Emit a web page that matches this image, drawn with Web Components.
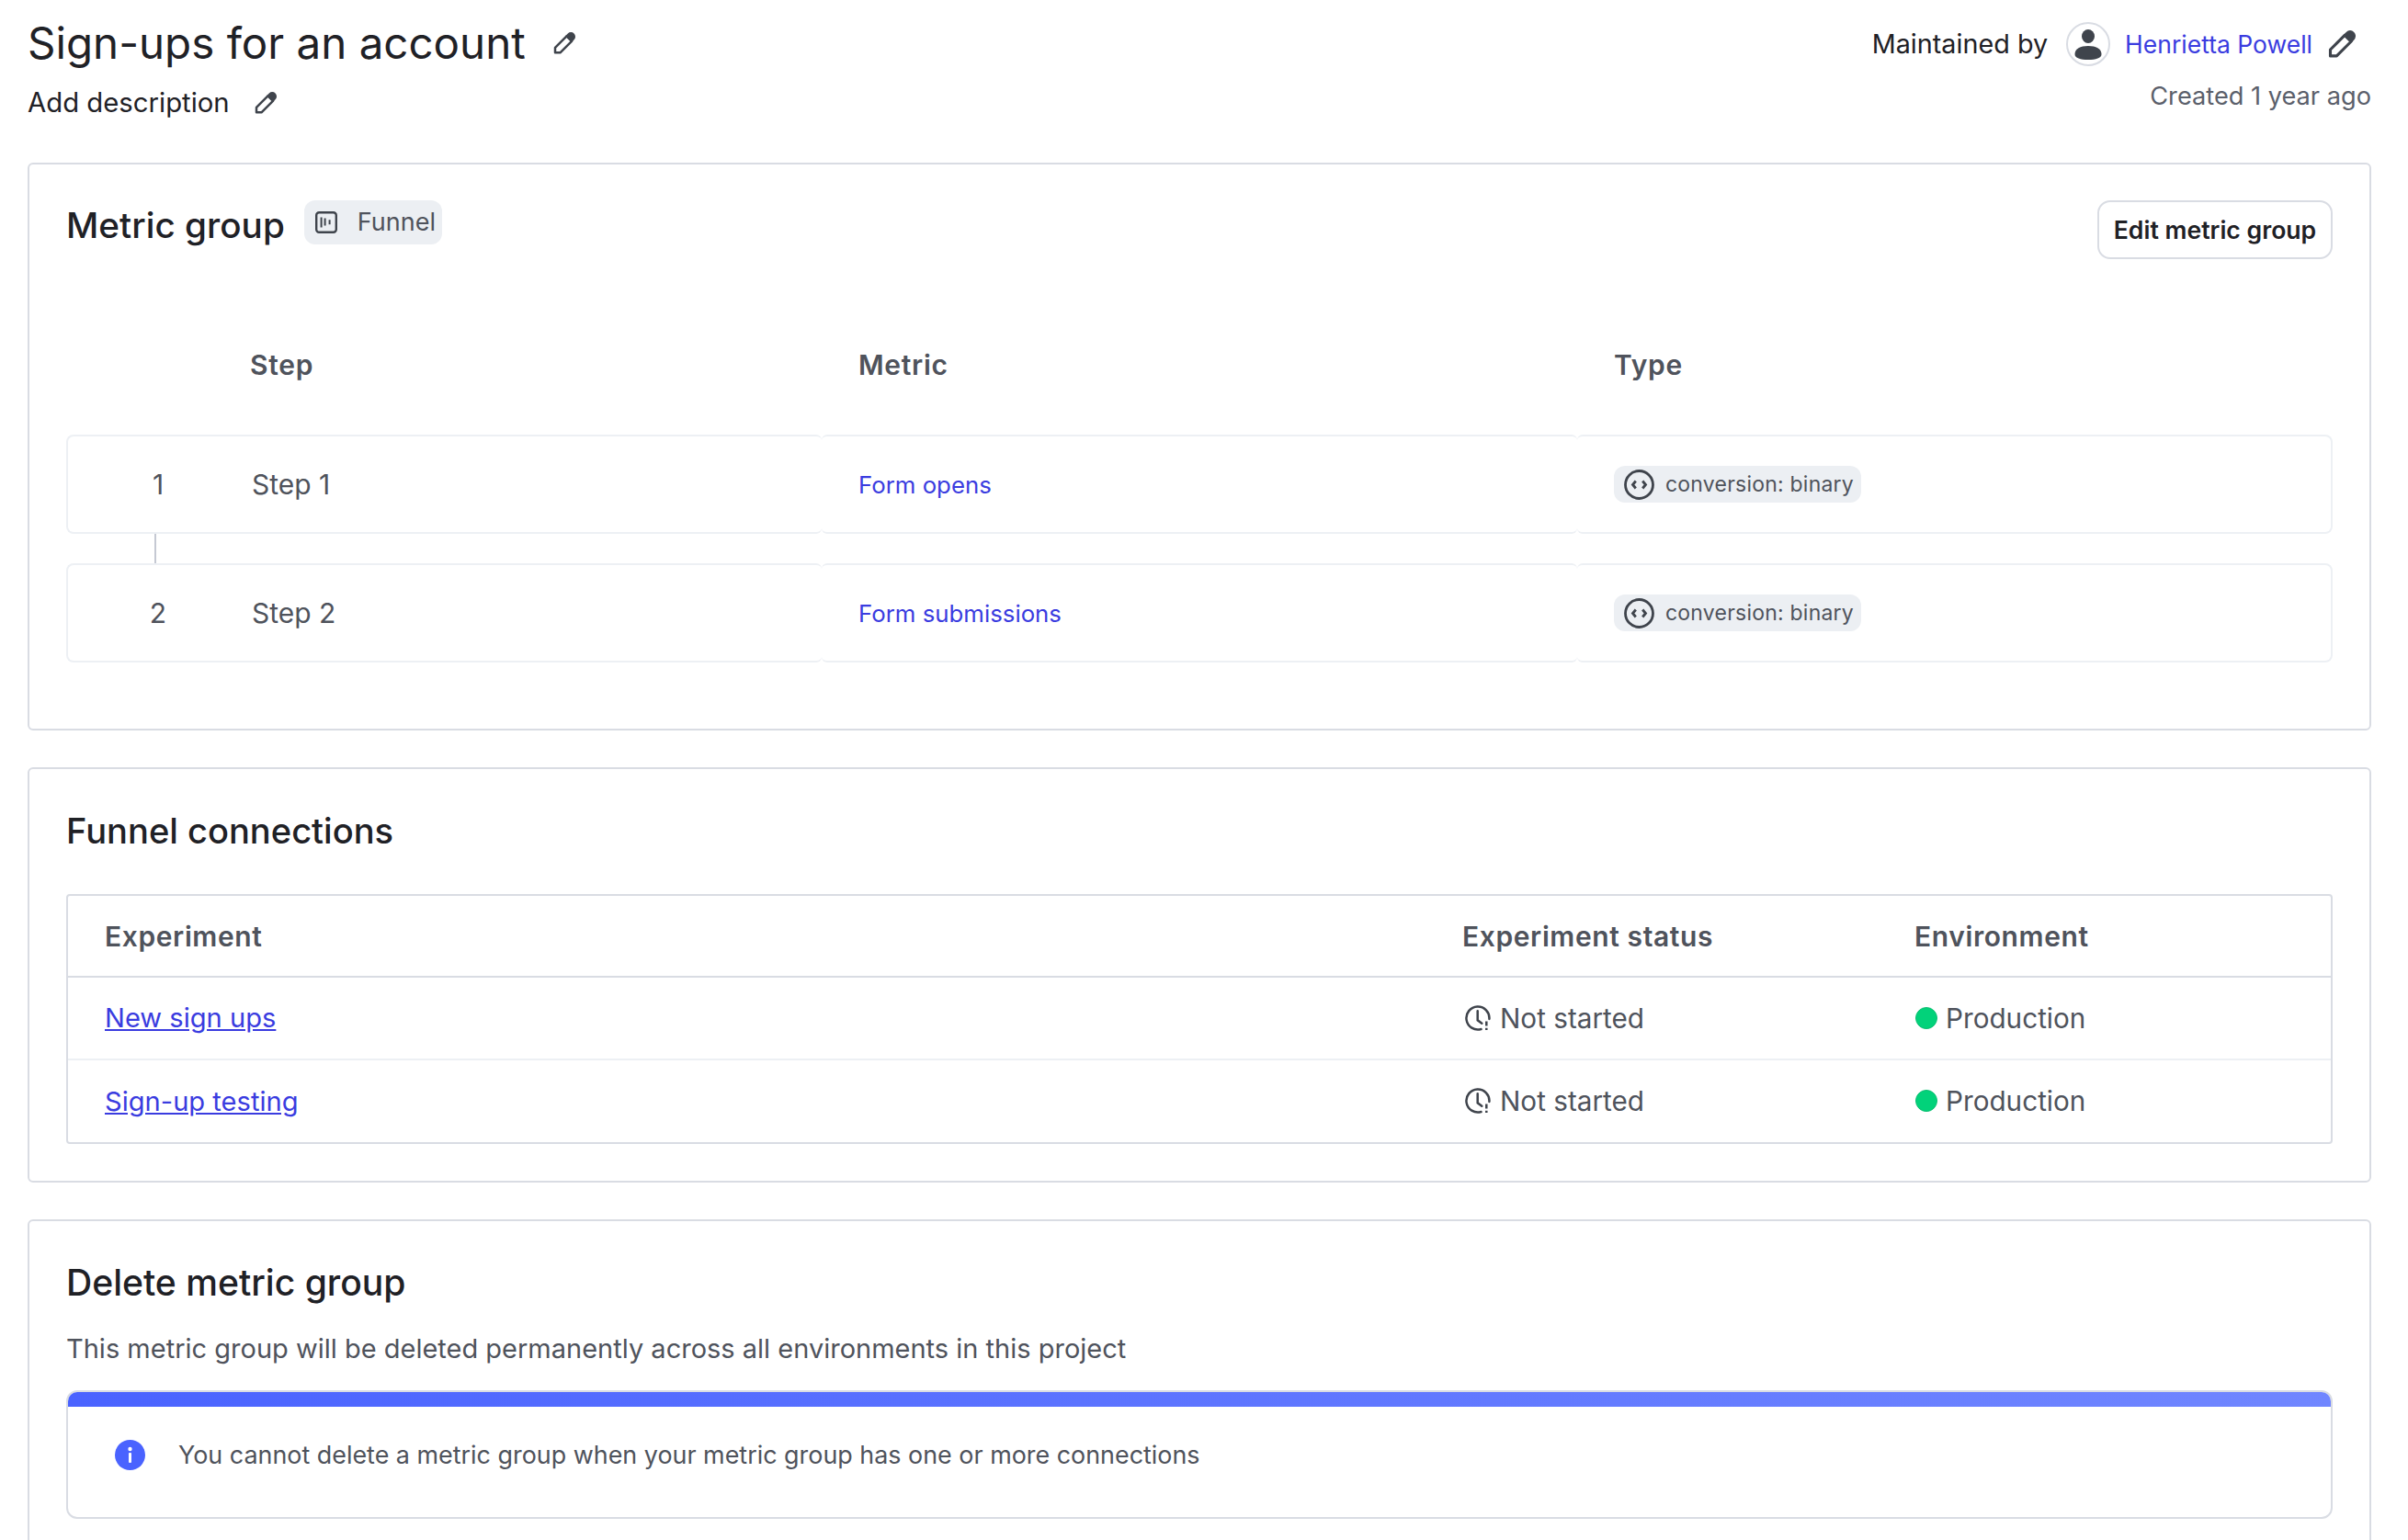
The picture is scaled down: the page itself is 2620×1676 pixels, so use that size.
<!doctype html>
<html><head><meta charset="utf-8"><title>Sign-ups for an account</title>
<style>
html,body{margin:0;padding:0;background:#fff;height:1676px;overflow:hidden}
body{font-family:Inter,"Liberation Sans",sans-serif;color:#1f2126}
</style></head><body>
<ui-page>
  <ui-header></ui-header>
  <ui-card>
    <metric-group></metric-group>
  </ui-card>
  <ui-card style="margin-top:40px">
    <funnel-connections></funnel-connections>
  </ui-card>
  <ui-card style="margin-top:40px">
    <delete-group></delete-group>
  </ui-card>
</ui-page>
<script>
const ICONS={
 pencil:'<svg viewBox="0 0 24 24" width="100%" height="100%"><path d="M2 22.300V16.800L14.500 4.300 20 9.800 7.500 22.300z" fill="none" stroke="currentColor" stroke-width="2.500" stroke-linejoin="round"/><path d="M13.500 3.800L15.800 1.500a4.200 4.200 0 0 1 6.800 6.800L20.500 10.800z" fill="currentColor"/></svg>',
 user:'<svg viewBox="0 0 48 48" width="100%" height="100%"><circle cx="24" cy="24" r="23" fill="#fff" stroke="#d9dce3" stroke-width="2"/><ellipse cx="24" cy="15.500" rx="7" ry="7.500" fill="#3f444c"/><path d="M9.500 35c0-6 6-9 14.500-9s14.500 3 14.500 9c0 4-6 6-14.500 6s-14.500-2-14.500-6z" fill="#3f444c"/></svg>',
 funnel:'<svg viewBox="0 0 24 24" width="100%" height="100%" fill="none" stroke="currentColor"><rect x="1.200" y="1.200" width="21.600" height="21.600" rx="3" stroke-width="2.400"/><path d="M6.600 6.500v11" stroke-width="2"/><path d="M10.600 7.500v8M15.600 9.300v5" stroke-width="2"/></svg>',
 code:'<svg viewBox="0 0 33 33" width="100%" height="100%" fill="none" stroke="currentColor"><circle cx="16.500" cy="16.500" r="15" stroke-width="2.800"/><path d="M12.800 12.500l-3.300 4 3.300 4M20.200 12.500l3.300 4-3.300 4" stroke-width="2.800"/></svg>',
 clock:'<svg viewBox="0 0 28 28" width="100%" height="100%" fill="none" stroke="currentColor" stroke-width="2.500"><path d="M17.500 26A12.500 12.500 0 1 1 26.400 15" stroke-linecap="round"/><path d="M13.700 6.300v10l4.600 3.400" stroke-linecap="round"/><path d="M23.300 17.500v5M23.300 24.800v2.200" /></svg>',
 info:'<svg viewBox="0 0 33 33" width="100%" height="100%"><circle cx="16.500" cy="16.500" r="16.500" fill="#4a63ff"/><circle cx="16.500" cy="10" r="2.200" fill="#fff"/><rect x="15" y="14" width="3" height="11" rx="1" fill="#fff"/></svg>'
};
function def(name,css,html){
  customElements.define(name,class extends HTMLElement{
    constructor(){super();const r=this.attachShadow({mode:'open'});
      r.innerHTML='<style>'+css+'</style>'+(typeof html==='function'?html(this):html);}
  });
}
def('ui-icon',':host{display:inline-block;flex:none;line-height:0;color:#3f444c}',
    el=>ICONS[el.getAttribute('name')]);
def('ui-page',':host{display:block;box-sizing:border-box;padding:0 40px 0 30px;width:2620px;height:1676px;overflow:hidden}','<slot></slot>');
def('ui-card',':host{display:block;box-sizing:border-box;border:2px solid #d9dce3;border-radius:6px;padding:40px;background:#fff}','<slot></slot>');
def('ui-header',`
 :host{display:flex;justify-content:space-between;height:177px;align-items:flex-start}
 h1{margin:0;padding-top:19px;font:400 47.5px/56px Inter,sans-serif;color:#1f2126;display:flex;align-items:center}
 h1 ui-icon{width:24px;height:24px;margin-left:30px}
 .desc{margin-top:15px;font:400 29.3px/44px Inter,sans-serif;display:flex;align-items:center;color:#1f2126}
 .desc ui-icon{width:24px;height:24px;margin-left:27px}
 .r{display:flex;flex-direction:column;align-items:flex-end}
 .m{display:flex;align-items:center;margin-top:24px;height:48px;margin-right:17px}
 .by{font:400 28.75px/48px Inter,sans-serif;color:#1f2126}
 .av{width:48px;height:48px;margin:0 16px 0 20px}
 a{font:400 26.5px/48px Inter,sans-serif;color:#3a3ce0;text-decoration:none}
 .m .p{width:30px;height:30px;margin-left:17px}
 .c{font:400 27.2px/40px Inter,sans-serif;color:#5b606b;margin-top:13px}
`,`<div><h1>Sign-ups for an account<ui-icon name="pencil"></ui-icon></h1>
 <div class="desc">Add description<ui-icon name="pencil"></ui-icon></div></div>
 <div class="r"><div class="m"><span class="by">Maintained by</span><ui-icon class="av" name="user"></ui-icon><a href="#">Henrietta Powell</a><ui-icon class="p" name="pencil"></ui-icon></div>
 <div class="c">Created 1 year ago</div></div>`);
def('ui-pill',`
 :host{display:inline-flex;align-items:center;background:#eceff3;border-radius:12px;color:#4f535c}
`,'<slot></slot>');
def('step-row',`
 :host{display:grid;grid-template-columns:repeat(3,1fr);height:108px;box-sizing:border-box}
 .cell{border:2px solid #edf0f4;display:flex;align-items:center;box-sizing:border-box;font:400 30px/40px Inter,sans-serif;color:#4f535c}
 .a{border-right:0;border-radius:8px 6px 6px 8px}
 .b{border-left:0;border-right:0;border-radius:6px;padding-left:40px}
 .c{border-left:0;border-radius:6px 8px 8px 6px;padding-left:40px}
 .n{width:200px;text-align:center;margin-left:-2px}
 .s{margin-left:2px}
 a{font:400 25.8px/40px Inter,sans-serif;color:#3a3ce0;text-decoration:none;margin-top:2px}
 ui-pill{height:40px;padding:0 8px 0 11px;font:400 23px/40px Inter,sans-serif;letter-spacing:.22px}
 ui-icon{width:33px;height:33px;margin-right:12px}
`,el=>`<div class="cell a"><span class="n">${el.getAttribute('n')}</span><span class="s">Step ${el.getAttribute('n')}</span></div>
 <div class="cell b"><a href="#">${el.getAttribute('metric')}</a></div>
 <div class="cell c"><ui-pill><ui-icon name="code"></ui-icon>conversion: binary</ui-pill></div>`);
def('metric-group',`
 :host{display:block;height:534px}
 .top{display:flex;align-items:flex-start}
 h2{margin:0;font:500 38.700px/48px Inter,sans-serif;color:#1f2126;margin-top:2px}
 ui-pill{height:48px;margin-left:21px;padding:0 7px 0 12px;font:400 27px/48px Inter,sans-serif;margin-top:-1px}
 ui-pill ui-icon{width:24px;height:24px;margin-right:22px}
 button{margin-left:auto;height:64px;width:256px;box-sizing:border-box;border:2px solid #d9dce3;border-radius:14px;background:#fff;font:600 26.600px/1 Inter,sans-serif;color:#1f2126;padding:0;margin-top:-1px}
 .th{display:grid;grid-template-columns:repeat(3,1fr);height:152px;align-items:center;font:600 30px/40px Inter,sans-serif;color:#4f535c;margin-top:39px;letter-spacing:.7px}
 .th span:first-child{padding-left:200px}
 .th span:nth-child(2){padding-left:40px}
 .th span:nth-child(3){padding-left:40px}
 .line{width:2px;height:32px;background:#c5c9d3;margin-left:96px}
`,`<div class="top"><h2>Metric group</h2><ui-pill><ui-icon name="funnel"></ui-icon>Funnel</ui-pill><button>Edit metric group</button></div>
 <div class="th"><span>Step</span><span>Metric</span><span>Type</span></div>
 <step-row n="1" metric="Form opens"></step-row><div class="line"></div><step-row n="2" metric="Form submissions"></step-row>`);
def('conn-row',`
 :host{display:grid;grid-template-columns:1fr 492px 453px;height:89.5px;box-sizing:border-box;align-items:center;font:400 29.700px/40px Inter,sans-serif;color:#4f535c;padding-left:40px}
 :host(:not(:last-child)){border-bottom:2px solid #edf0f4}
 a{color:#3a3ce0;font-size:29.100px}
 .st,.env{display:flex;align-items:center}
 .st ui-icon{width:28px;height:28px;margin:0 10px 0 3px;color:#3f444c}
 .dot{width:24px;height:24px;border-radius:50%;background:#02d27a;box-sizing:border-box;border:1px solid #0cbf72;margin-right:9px;margin-left:1px}
`,el=>`<span><a href="#">${el.getAttribute('name')}</a></span><span class="st"><ui-icon name="clock"></ui-icon>Not started</span><span class="env"><span class="dot"></span>Production</span>`);
def('funnel-connections',`
 :host{display:block}
 h2{margin:0;font:500 38.100px/48px Inter,sans-serif;color:#1f2126;padding-top:3px}
 .t{margin-top:45px;border:2px solid #d9dce3;border-radius:4px}
 .h{display:grid;grid-template-columns:1fr 492px 453px;height:89px;box-sizing:border-box;align-items:center;border-bottom:2px solid #d9dce3;font:600 30px/40px Inter,sans-serif;color:#4f535c;padding-left:40px;letter-spacing:.6px}
`,`<h2>Funnel connections</h2><div class="t"><div class="h"><span>Experiment</span><span>Experiment status</span><span>Environment</span></div>
 <conn-row name="New sign ups"></conn-row><conn-row name="Sign-up testing"></conn-row></div>`);
def('delete-group',`
 :host{display:block}
 h2{margin:0;font:500 39.100px/48px Inter,sans-serif;color:#1f2126;padding-top:3px}
 p{margin:28px 0 0;font:400 29px/40px Inter,sans-serif;color:#4f535c}
 .n{margin-top:25px;border:2px solid #d9dce3;border-radius:12px;overflow:hidden;height:140px;box-sizing:border-box}
 .bar{height:16px;background:linear-gradient(90deg,#4a63ff,#7086ff)}
 .b{display:flex;align-items:center;height:104px;padding-left:51px;font:400 26.900px/40px Inter,sans-serif;color:#4f535c}
 ui-icon{width:33px;height:33px;margin-right:36px}
`,`<h2>Delete metric group</h2><p>This metric group will be deleted permanently across all environments in this project</p>
 <div class="n"><div class="bar"></div><div class="b"><ui-icon name="info"></ui-icon>You cannot delete a metric group when your metric group has one or more connections</div></div>`);
</script>
</body></html>
